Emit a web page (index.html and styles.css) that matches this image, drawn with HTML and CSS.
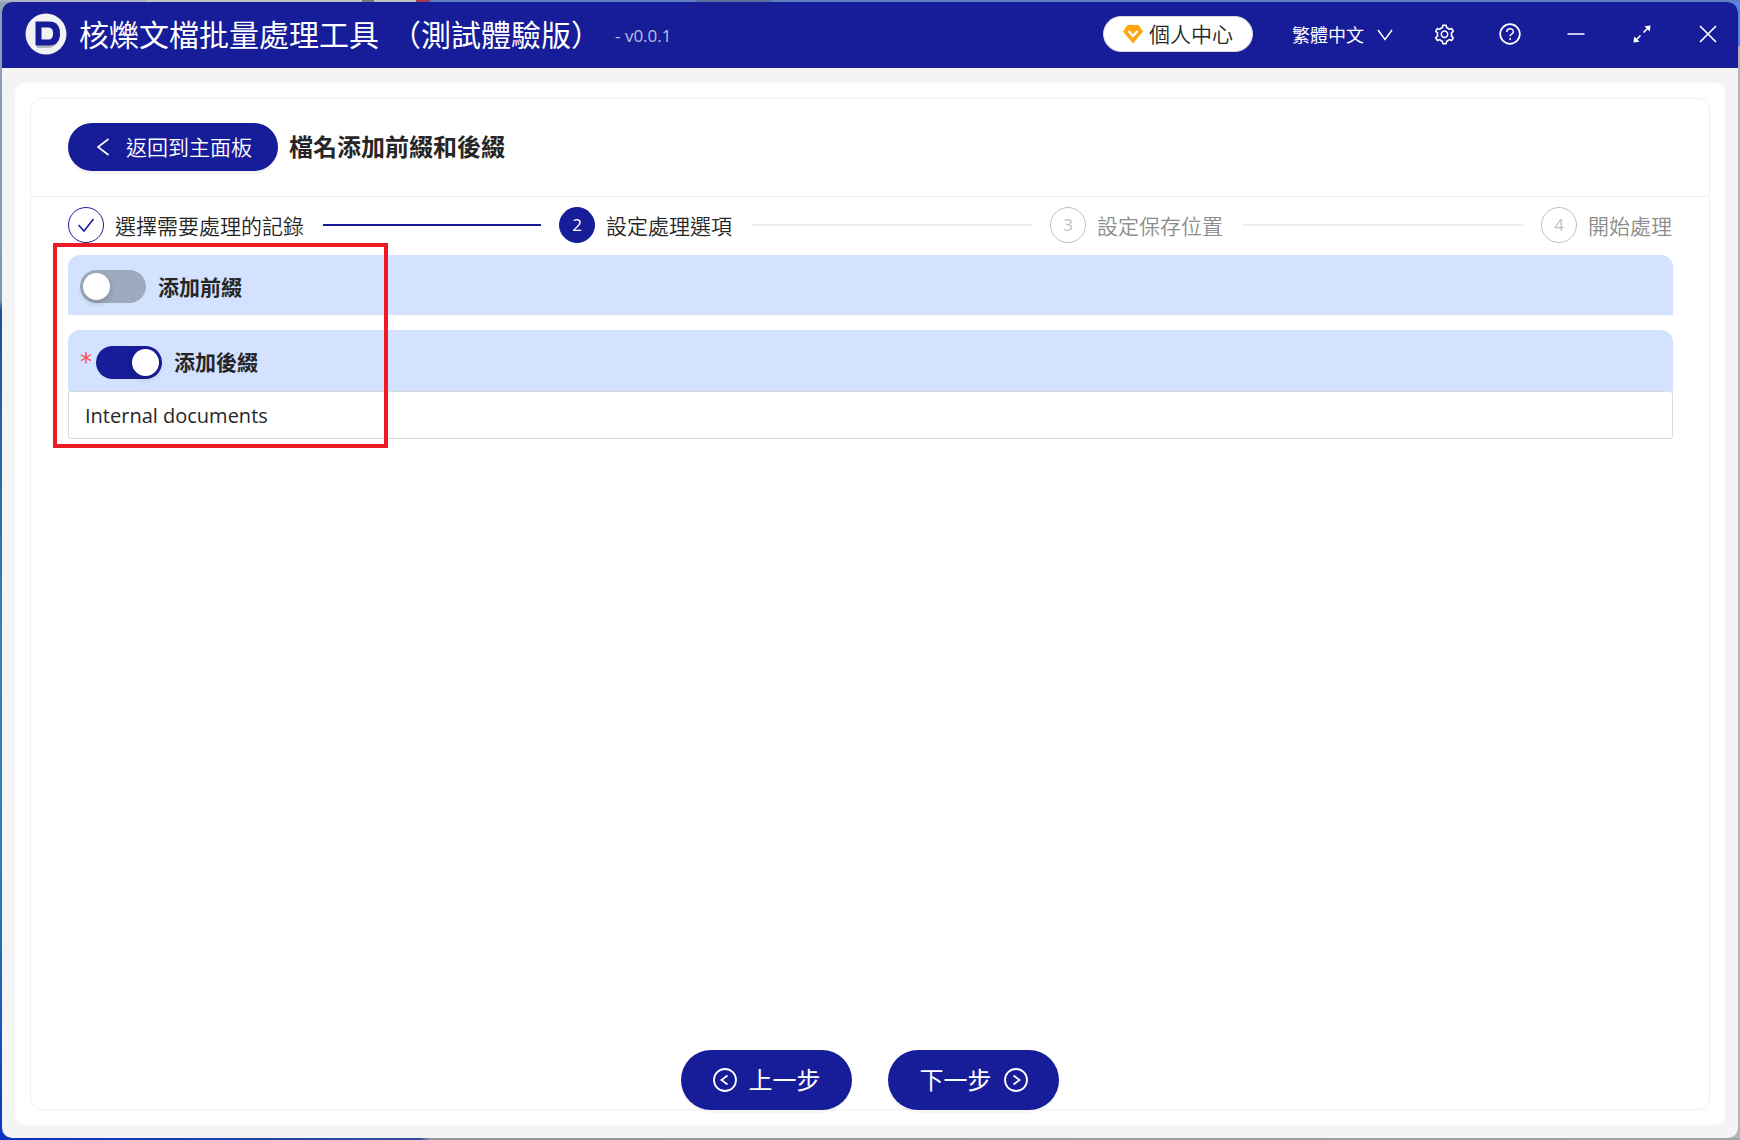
FILE: index.html
```html
<!DOCTYPE html>
<html lang="zh-Hant">
<head>
<meta charset="utf-8">
<meta name="viewport" content="width=device-width, initial-scale=1">
<title>核爍文檔批量處理工具</title>
<link rel="stylesheet" href="styles.css">
</head>
<body>
<div class="window">
  <header class="titlebar">
    <svg class="logo" viewBox="0 0 42 42" aria-hidden="true">
      <circle cx="21" cy="21" r="20.5" fill="#f2f2f4"/>
      <path d="M12 12h11c7 0 11 4 11 10.500s-4 12.500-11 12.500H12z" fill="#b4b4bc"/>
      <path d="M10.500 8.500H24c7.500 0 11 4.500 11 12s-3.500 12-11 12H10.500z" fill="#171c98"/>
      <path d="M16.500 14.500H23c3.500 0 5 2 5 6s-1.500 6-5 6h-6.500z" fill="#f2f2f4"/>
    </svg>
    <h1 class="app-name"><span>核爍文檔批量處理工具</span><span>（測試體驗版）</span></h1>
    <span class="version">- v0.0.1</span>
    <button class="account" type="button">
      <svg width="20" height="20" viewBox="0 0 20 20" aria-hidden="true"><path d="M4.500 1h11L20 7.500 10 19.500 0 7.500z" fill="#ffa60f"/><path d="M5.500 7l4.500 5 4.500-5" fill="none" stroke="#fff" stroke-width="2.400"/></svg>
      <span>個人中心</span>
    </button>
    <div class="language">
      <select class="language-select" aria-label="語言"><option>繁體中文</option></select>
      <svg class="language-arrow" width="16" height="16" viewBox="0 0 16 16" aria-hidden="true"><path d="M1 3l7 9.500L15 3" fill="none" stroke="#fff" stroke-width="1.500"/></svg>
    </div>
    <div class="tools">
      <button class="tool" type="button" aria-label="設定"><svg width="23" height="23" viewBox="0 0 1024 1024" fill="#fff"><path d="M924.8 625.7l-65.500-56c3.100-19 4.700-38.400 4.700-57.800s-1.600-38.800-4.700-57.800l65.500-56a32.030 32.030 0 009.300-35.200l-.9-2.600a443.740 443.740 0 00-79.700-137.900l-1.800-2.100a32.120 32.120 0 00-35.100-9.500l-81.300 28.900c-30-24.600-63.500-44-99.700-57.600l-15.700-85a32.050 32.050 0 00-25.800-25.700l-2.700-.5c-52.100-9.400-106.900-9.400-159 0l-2.700.5a32.050 32.050 0 00-25.800 25.700l-15.800 85.400a351.860 351.860 0 00-99 57.400l-81.900-29.100a32 32 0 00-35.100 9.500l-1.800 2.100a446.020 446.020 0 00-79.700 137.900l-.9 2.600c-4.500 12.500-.8 26.500 9.300 35.200l66.300 56.600c-3.100 18.800-4.600 38-4.600 57.100 0 19.200 1.500 38.400 4.600 57.100L99 625.500a32.030 32.030 0 00-9.300 35.200l.9 2.600c18.100 50.400 44.900 96.900 79.700 137.900l1.800 2.100a32.120 32.120 0 0035.100 9.500l81.900-29.100c29.800 24.500 63.100 43.900 99 57.400l15.800 85.400a32.050 32.050 0 0025.800 25.700l2.700.5a449.400 449.400 0 00159 0l2.700-.5a32.050 32.050 0 0025.800-25.700l15.700-85a350 350 0 0099.700-57.600l81.300 28.900a32 32 0 0035.100-9.500l1.800-2.100c34.800-41.100 61.600-87.500 79.700-137.900l.9-2.600c4.500-12.300.8-26.300-9.300-35zM788.300 465.900c2.500 15.100 3.800 30.600 3.800 46.100s-1.300 31-3.800 46.100l-6.600 40.100 74.700 63.900a370.030 370.030 0 01-42.600 73.600L721 702.800l-31.400 25.800c-23.900 19.600-50.500 35-79.300 45.800l-38.100 14.300-17.900 97a377.500 377.500 0 01-85 0l-17.900-97.200-37.800-14.500c-28.500-10.800-55-26.200-78.700-45.700l-31.400-25.900-93.400 33.200c-17-22.900-31.200-47.600-42.600-73.600l75.500-64.500-6.500-40c-2.400-14.900-3.700-30.300-3.700-45.500 0-15.300 1.200-30.600 3.700-45.500l6.500-40-75.500-64.500c11.300-26.100 25.600-50.700 42.600-73.600l93.400 33.200 31.400-25.900c23.700-19.500 50.200-34.900 78.700-45.700l37.900-14.300 17.900-97.200c28.100-3.200 56.800-3.200 85 0l17.900 97 38.100 14.300c28.700 10.800 55.400 26.200 79.300 45.800l31.400 25.800 92.800-32.900c17 22.900 31.200 47.600 42.600 73.600L781.800 426l6.500 39.900zM512 326c-97.200 0-176 78.800-176 176s78.800 176 176 176 176-78.800 176-176-78.800-176-176-176zm79.200 255.200A111.600 111.600 0 01512 614c-29.900 0-58-11.700-79.200-32.800A111.600 111.600 0 01400 502c0-29.900 11.700-58 32.800-79.200C454 401.600 482.100 390 512 390c29.900 0 58 11.600 79.200 32.800A111.600 111.600 0 01624 502c0 29.900-11.700 58-32.800 79.200z"/></svg></button>
      <button class="tool" type="button" aria-label="說明"><svg width="22" height="22" viewBox="0 0 22 22" fill="none" stroke="#fff" stroke-width="1.700"><circle cx="11" cy="11" r="9.800"/><path d="M7.800 9c0-4.300 6.600-4.200 6.600-.3 0 2.300-3.300 2.300-3.300 4.600" stroke-width="1.500"/><circle cx="11.100" cy="16" r="1" fill="#fff" stroke="none"/></svg></button>
      <button class="tool" type="button" aria-label="最小化"><svg width="22" height="22" viewBox="0 0 22 22"><path d="M2.500 11h17" stroke="#fff" stroke-width="1.700"/></svg></button>
      <button class="tool" type="button" aria-label="最大化"><svg width="22" height="22" viewBox="0 0 22 22" fill="#fff"><path d="M12.500 9.500l5-5M9.500 12.500l-5 5" stroke="#fff" stroke-width="1.600"/><path d="M13.500 3.200l6-.7-.7 6zM8.500 18.800l-6 .7.700-6z"/></svg></button>
      <button class="tool" type="button" aria-label="關閉"><svg width="22" height="22" viewBox="0 0 22 22"><path d="M3 3l16 16M19 3L3 19" stroke="#fff" stroke-width="1.700"/></svg></button>
    </div>
  </header>
  <div class="workspace">
    <div class="panel">
      <main class="card">
        <div class="card-head">
          <button class="back" type="button">
            <svg width="14" height="20" viewBox="0 0 14 20" aria-hidden="true"><path d="M12.500 2L2 10l10.500 8" fill="none" stroke="#fff" stroke-width="1.600"/></svg>
            <span>返回到主面板</span>
          </button>
          <h2 class="card-title">檔名添加前綴和後綴</h2>
        </div>
        <ol class="steps">
          <li class="step done"><span class="marker"><svg width="18" height="18" viewBox="0 0 18 18" aria-hidden="true"><path d="M1.500 9l5.500 6L16.500 3" fill="none" stroke="#171c98" stroke-width="1.500"/></svg></span><span class="step-label">選擇需要處理的記錄</span></li>
          <li class="step active" aria-current="step"><span class="marker">2</span><span class="step-label">設定處理選項</span></li>
          <li class="step"><span class="marker">3</span><span class="step-label">設定保存位置</span></li>
          <li class="step"><span class="marker">4</span><span class="step-label">開始處理</span></li>
        </ol>
        <form class="options">
          <div class="option">
            <input class="switch" type="checkbox" id="prefix">
            <label class="option-label" for="prefix">添加前綴</label>
          </div>
          <div class="option-group">
            <div class="option required">
              <span class="star" aria-hidden="true">*</span>
              <input class="switch" type="checkbox" id="suffix" checked>
              <label class="option-label" for="suffix">添加後綴</label>
            </div>
            <input class="text-field" type="text" aria-label="後綴內容" value="Internal documents">
          </div>
          <div class="highlight"></div>
        </form>
        <footer class="actions">
          <button class="action" type="button">
            <svg width="24" height="24" viewBox="0 0 24 24" fill="none" stroke="#fff" stroke-width="1.800" aria-hidden="true"><circle cx="12" cy="12" r="11"/><path d="M14.500 7.500L8.500 12l6 4.500"/></svg>
            <span>上一步</span>
          </button>
          <button class="action" type="button">
            <span>下一步</span>
            <svg width="24" height="24" viewBox="0 0 24 24" fill="none" stroke="#fff" stroke-width="1.800" aria-hidden="true"><circle cx="12" cy="12" r="11"/><path d="M9.500 7.500l6 4.500-6 4.500"/></svg>
          </button>
        </footer>
      </main>
    </div>
  </div>
</div>
</body>
</html>
```
FILE: styles.css
```css
:root {
  --brand: #171c98;
  --tint: #d3e2fe;
  --line: #f0f0f0;
  --ink: #262626;
}

* {
  box-sizing: border-box;
}

body {
  margin: 0;
  min-height: 100vh;
  display: flex;
  padding: 2px;
  color: var(--ink);
  font: 350 21px/32px "Open Sans", "Noto Sans CJK TC", sans-serif;
  background:
    linear-gradient(90deg, #a9b6bf 0 146px, #c2c0c8 146px 362px, #77777c 362px 374px, #c2c0c8 374px 416px, #a83a55 416px 430px, #5f7fc0 430px 696px, #596f9c 696px 772px, #5f7fc0 772px) top / 100% 2px no-repeat,
    linear-gradient(90deg, #0b2fc0 0, #2f4f98 420px, #8f979c 430px, #a3a3a3 100%) bottom / 100% 2px no-repeat,
    linear-gradient(#8fa0b2 0, #8397ab 300px, #1d4f9c 310px, #3a80b0 640px, #2a78b8 900px, #0b35c4 100%) left / 50% 100% no-repeat,
    linear-gradient(#4f86ee 0 46px, #b4b4b4 46px) right / 50% 100% no-repeat;
}

button,
select,
input {
  margin: 0;
  font: inherit;
  color: inherit;
}

button {
  display: flex;
  align-items: center;
  justify-content: center;
  padding: 0;
  border: 0;
  background: none;
  cursor: pointer;
}

svg {
  flex: none;
}

.window {
  flex: 1;
  display: flex;
  flex-direction: column;
  border-radius: 10px;
  overflow: hidden;
  background: #f4f4f4;
}

.titlebar {
  height: 66px;
  display: flex;
  align-items: center;
  padding: 0 12px 2px 23px;
  background: var(--brand);
  color: #fff;
}

.logo {
  width: 42px;
  height: 42px;
}

.app-name {
  display: flex;
  gap: 12px;
  margin: 0;
  padding: 2px 0 0 12px;
  font-size: 30px;
  font-weight: 400;
  line-height: 40px;
  white-space: nowrap;
}

.version {
  margin-left: 14px;
  padding-top: 4px;
  font-family: "Open Sans", sans-serif;
  font-size: 17px;
  font-weight: 400;
  opacity: .7;
}

.account {
  height: 36px;
  width: 150px;
  gap: 6px;
  margin-left: auto;
  border: 1px solid #d9d9d9;
  border-radius: 18px;
  background: #fff;
  color: var(--ink);
}

.language {
  position: relative;
  width: 101px;
  margin: 0 33px 0 39px;
  padding-top: 2px;
}

.language-select {
  display: block;
  width: 100%;
  padding: 0;
  border: 0;
  appearance: none;
  background: none;
  font-size: 18px;
  font-weight: 400;
}

.language-arrow {
  position: absolute;
  top: 10px;
  right: 0;
  pointer-events: none;
}

.tools {
  display: flex;
  gap: 30px;
}

.tool {
  width: 36px;
  height: 36px;
}

.workspace {
  flex: 1;
  display: flex;
  padding: 15px 13px 13px;
}

.panel {
  flex: 1;
  display: flex;
  padding: 15px;
  border-radius: 10px;
  background: #fff;
}

.card {
  flex: 1;
  display: flex;
  flex-direction: column;
  border: 1px solid var(--line);
  border-radius: 12px;
}

.card-head {
  display: flex;
  align-items: center;
  gap: 11px;
  padding: 24px 37px 25px;
  border-bottom: 1px solid var(--line);
}

.back {
  width: 210px;
  height: 48px;
  gap: 16px;
  padding-left: 2px;
  border-radius: 24px;
  background: var(--brand);
  color: #fff;
  box-shadow: 0 3px 0 rgba(0, 0, 0, .04);
}

.card-title {
  margin: 0;
  font-size: 24px;
  font-weight: 700;
}

.steps {
  display: flex;
  margin: 0;
  padding: 10px 37px 12px;
  list-style: none;
}

.step {
  flex: 1;
  display: flex;
  align-items: center;
  gap: 11px;
  padding-left: 18px;
  color: #8c8c8c;
  white-space: nowrap;
}

.step:first-child {
  padding-left: 0;
}

.step:last-child {
  flex: none;
}

.step-label {
  padding-top: 2px;
}

.step:not(:last-child)::after {
  content: "";
  flex: 1;
  height: 2px;
  margin-left: 8px;
  background: var(--line);
}

.step.done::after {
  background: var(--brand);
}

.step.done,
.step.active {
  color: var(--ink);
}

.marker {
  flex: none;
  width: 36px;
  height: 36px;
  display: flex;
  align-items: center;
  justify-content: center;
  border: 1px solid #bfbfbf;
  border-radius: 50%;
  color: #bfbfbf;
  font-size: 17px;
  font-weight: 400;
}

.done .marker {
  border-color: var(--brand);
}

.active .marker {
  border-color: var(--brand);
  background: var(--brand);
  color: #fff;
}

.options {
  position: relative;
  display: flex;
  flex-direction: column;
  gap: 15px;
  padding: 0 36px 0 37px;
}

.option {
  height: 60px;
  display: flex;
  align-items: center;
  gap: 12px;
  padding: 3px 12px 0;
  border-radius: 12px 12px 0 0;
  background: var(--tint);
}

.option.required {
  height: 61px;
}

.star {
  width: 4px;
  color: #ff4d4f;
  font-family: "DejaVu Sans", sans-serif;
  font-weight: 400;
  font-size: 24px;
  line-height: 24px;
}

.option-label {
  font-weight: 700;
}

.switch {
  appearance: none;
  width: 66px;
  height: 33px;
  padding: 3px;
  display: flex;
  border-radius: 17px;
  background: #9eaabe;
  cursor: pointer;
}

.switch::before {
  content: "";
  width: 27px;
  height: 27px;
  border-radius: 50%;
  background: #fff;
  box-shadow: 0 3px 6px rgba(0, 35, 11, .2);
}

.switch:checked {
  justify-content: flex-end;
  background: var(--brand);
}

.text-field {
  display: block;
  width: 100%;
  height: 48px;
  padding: 0 16px;
  border: 1px solid #d9d9d9;
  border-radius: 3px;
  background: #fff;
  font-size: 20px;
  font-weight: 400;
}

/* Callout frame laid over the two options */
.highlight {
  position: absolute;
  top: -12px;
  left: 22px;
  width: 335px;
  height: 205px;
  border: 4px solid #ed1c24;
  pointer-events: none;
}

.actions {
  display: flex;
  justify-content: center;
  gap: 36px;
  margin: auto 0 -1px;
  padding-top: 24px;
}

.action {
  width: 171px;
  height: 60px;
  gap: 12px;
  border-radius: 30px;
  background: var(--brand);
  color: #fff;
  font-size: 24px;
  font-weight: 400;
  box-shadow: 0 3px 0 rgba(0, 0, 0, .03);
}
```
